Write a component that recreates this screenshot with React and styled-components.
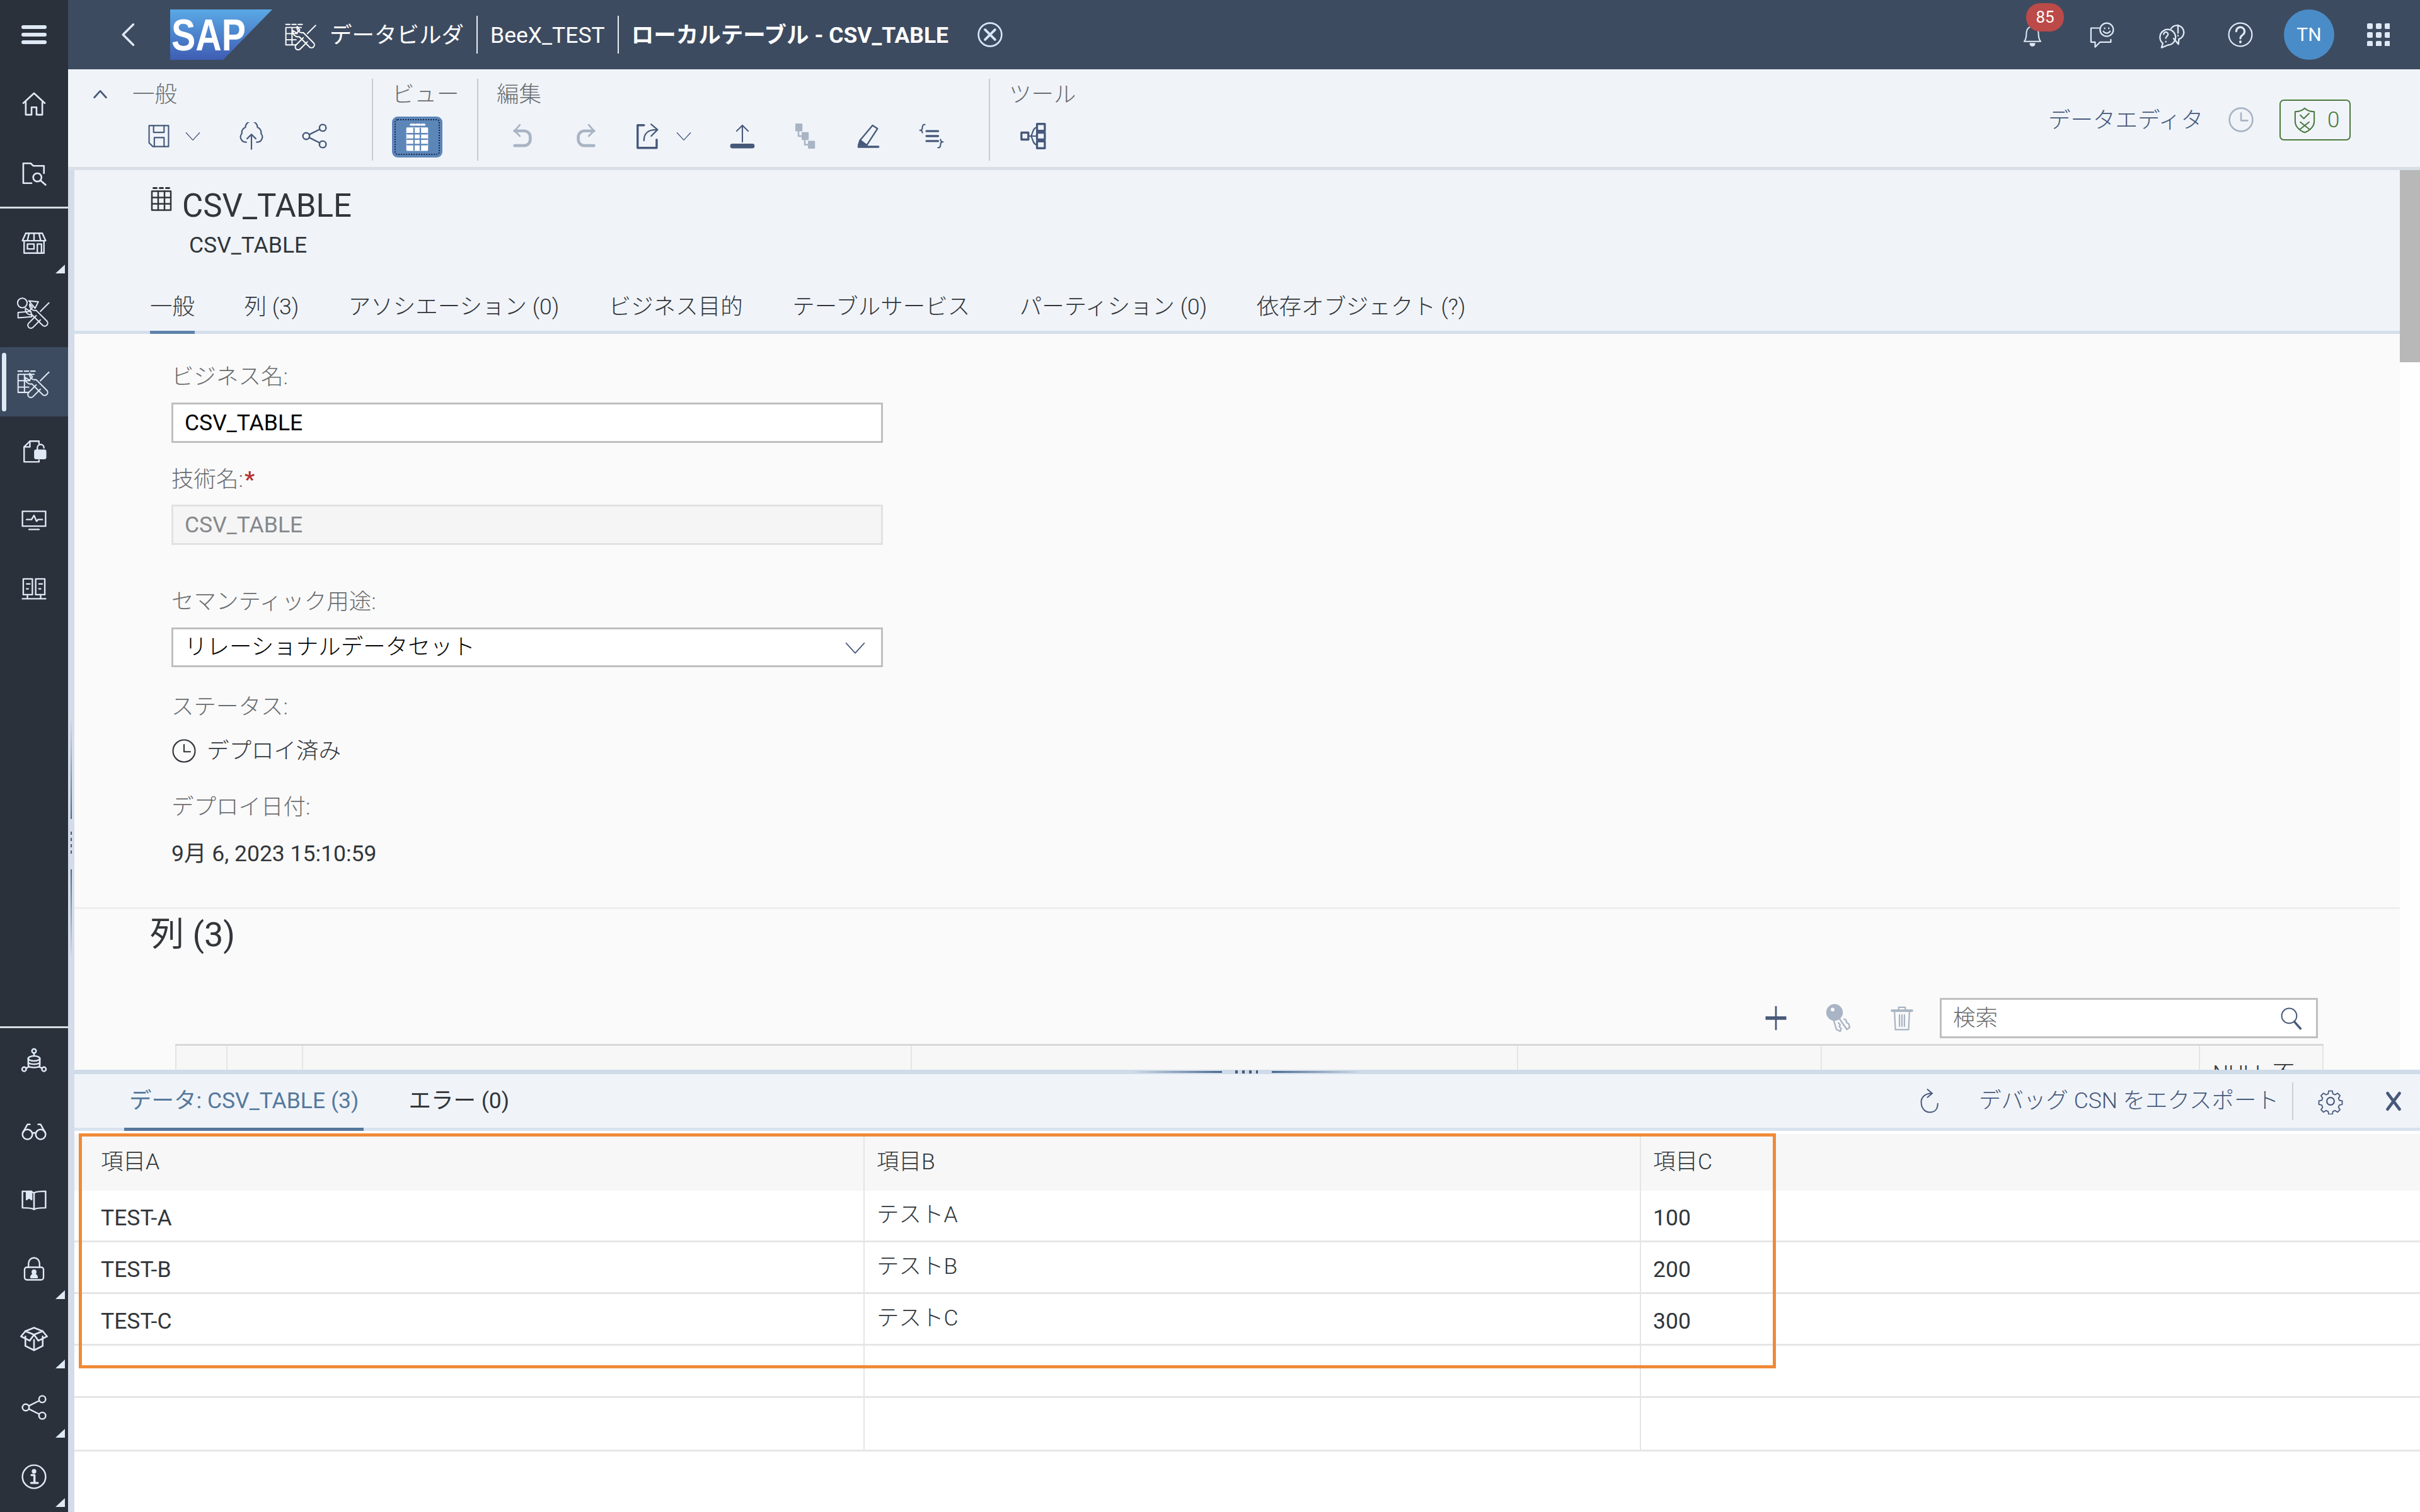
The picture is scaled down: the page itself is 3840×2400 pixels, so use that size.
import styled, { createGlobalStyle } from 'styled-components';

const SIDEBAR_W = 108;

const GlobalStyle = createGlobalStyle`
  html, body { margin: 0; padding: 0; background: #fff; }
  * { box-sizing: border-box; }
  body { font-family: Roboto, "Noto Sans CJK JP", sans-serif; font-size: 35.5px; font-weight: 300; color: #32363a; }
`;

const Page = styled.div`
  position: relative;
  width: 3840px;
  height: 2400px;
  overflow: hidden;
  display: grid;
  grid-template-columns: ${SIDEBAR_W}px 1fr;
`;

/* sidebar */
const Sidebar = styled.nav`
  background: #2a313b;
  color: #dfe9f5;
  display: flex;
  flex-direction: column;
`;
const NavGroup = styled.div`
  display: flex;
  flex-direction: column;
  height: ${p => (p.$ruled ? '221px' : 'auto')};
  border-bottom: ${p => (p.$ruled ? '3px solid #d8dde3' : 'none')};
`;
const NavSpacer = styled.div`
  height: ${p => p.$h}px;
`;
const NavRule = styled.div`
  height: 3px;
  margin-bottom: -3px;
  position: relative;
  z-index: 1;
  background: #d8dde3;
`;
const NavItem = styled.div`
  position: relative;
  height: 110px;
  flex: none;
  display: flex;
  align-items: center;
  justify-content: center;
  background: ${p => (p.$active ? '#3d4b60' : 'transparent')};
  &::before {
    content: '';
    display: ${p => (p.$active ? 'block' : 'none')};
    position: absolute;
    left: 3px;
    top: 9px;
    width: 7px;
    height: 93px;
    border-radius: 4px;
    background: #dfe9f5;
  }
  &::after {
    content: '';
    display: ${p => (p.$more ? 'block' : 'none')};
    position: absolute;
    right: 5px;
    bottom: 7px;
    border-style: solid;
    border-width: 0 0 14px 15px;
    border-color: transparent transparent #dfe9f5 transparent;
  }
`;

/* shell header */
const Main = styled.div`
  display: flex;
  flex-direction: column;
  min-width: 0;
`;
const ShellHeader = styled.header`
  position: relative;
  height: 110px;
  flex: none;
  background: #3d4b60;
  color: #fff;
  display: flex;
  align-items: center;
`;
const BackSlot = styled.span`
  position: absolute;
  left: 76px;
  top: 35px;
  color: #dfe9f5;
  display: flex;
`;
const CrumbRow = styled.div`
  display: flex;
  align-items: center;
  margin-left: 162px;
  height: 110px;
`;
const LogoBox = styled.svg`
  display: block;
  flex: none;
`;
const CrumbIcon = styled.span`
  display: flex;
  margin: 0 19px 0 20px;
`;
const CrumbText = styled.span`
  line-height: 44px;
  white-space: nowrap;
  font-weight: ${p => (p.$strong ? 700 : 400)};
  margin-top: 2px;
`;
const CrumbSep = styled.span`
  width: 2px;
  height: 60px;
  margin: 0 20px;
  background: #e8edf3;
`;
const CloseSlot = styled.span`
  display: flex;
  margin-left: 45px;
  color: #d6e6f7;
`;
const HeadAction = styled.span`
  position: absolute;
  left: ${p => p.$x - SIDEBAR_W}px;
  top: 55px;
  transform: translate(-50%, -50%);
  color: #dfe9f5;
  display: flex;
`;
const BellBadge = styled.span`
  position: absolute;
  left: ${3215 - SIDEBAR_W}px;
  top: 5px;
  width: 60px;
  height: 45px;
  border-radius: 22px;
  background: #bb4a48;
  color: #fff;
  font-size: 26px;
  font-weight: 400;
  line-height: 44px;
  text-align: center;
`;
const Avatar = styled.span`
  position: absolute;
  left: ${3624 - SIDEBAR_W}px;
  top: 15px;
  width: 80px;
  height: 80px;
  border-radius: 50%;
  background: #4a8cc8;
  color: #fff;
  font-size: 30px;
  font-weight: 400;
  line-height: 80px;
  text-align: center;
`;

/* toolbar */
const Toolbar = styled.div`
  position: relative;
  height: 160px;
  flex: none;
  background: #f0f4f9;
  border-bottom: 5px solid #d9dfe6;
`;
const GroupLabel = styled.span`
  position: absolute;
  left: ${p => p.$x - SIDEBAR_W}px;
  top: 18px;
  line-height: 44px;
  color: #6a6d70;
`;
const GroupSep = styled.span`
  position: absolute;
  left: ${p => p.$x - SIDEBAR_W}px;
  top: 15px;
  width: 2px;
  height: 130px;
  background: #c6ccd3;
`;
const ToolSlot = styled.span`
  position: absolute;
  left: ${p => p.$x - SIDEBAR_W}px;
  top: ${p => p.$y || 106}px;
  transform: translate(-50%, -50%);
  display: flex;
  color: ${p => (p.$off ? '#a9b4c4' : '#47597a')};
`;
const ViewToggle = styled.span`
  position: absolute;
  left: ${622 - SIDEBAR_W}px;
  top: 75px;
  width: 80px;
  height: 65px;
  border-radius: 9px;
  background: #5d86b8;
  color: #fff;
  outline: 2px dotted #16294a;
  outline-offset: -6px;
  display: flex;
  align-items: center;
  justify-content: center;
`;
const EditorName = styled.span`
  position: absolute;
  left: ${3250 - SIDEBAR_W}px;
  top: 59px;
  line-height: 44px;
  color: #47597a;
`;
const CheckBadge = styled.span`
  position: absolute;
  left: ${3617 - SIDEBAR_W}px;
  top: 48px;
  width: 113px;
  height: 65px;
  border: 2px solid #4c7a3f;
  border-radius: 7px;
  color: #4c7a3f;
  display: flex;
  align-items: center;
  padding-left: 16px;
  gap: 14px;
  font-size: 35px;
`;

/* body */
const Body = styled.div`
  flex: 1;
  display: flex;
  min-height: 0;
`;
const SideSplitter = styled.div`
  position: relative;
  width: 10px;
  flex: none;
  background: #d3dce8;
`;
const SideGrip = styled.span`
  position: absolute;
  left: 4px;
  top: ${p => p.$top}px;
  width: 2px;
  height: ${p => p.$h}px;
  background: ${p => p.$bg};
`;
const Workspace = styled.div`
  flex: 1;
  min-width: 0;
  display: flex;
  flex-direction: column;
`;
const UpperPane = styled.div`
  position: relative;
  height: 1428px;
  flex: none;
  overflow: hidden;
`;
const ScrollTrack = styled.div`
  position: absolute;
  right: 0;
  top: 0;
  bottom: 0;
  width: 32px;
  background: #fefefe;
  &::before {
    content: '';
    position: absolute;
    left: 0;
    right: 0;
    top: 0;
    height: 305px;
    background: #b8b8b8;
  }
`;
const ObjectHeader = styled.section`
  position: relative;
  height: 260px;
  background: #f0f4f9;
  border-bottom: 5px solid #d5dfeb;
`;
const TableGlyph = styled.span`
  position: absolute;
  left: 118px;
  top: 26px;
  display: flex;
  color: #32363a;
`;
const ObjectTitle = styled.h1`
  position: absolute;
  left: 171px;
  top: 27px;
  margin: 0;
  font-size: 51px;
  line-height: 60px;
  font-weight: 400;
`;
const ObjectSub = styled.div`
  position: absolute;
  left: 182px;
  top: 97px;
  line-height: 44px;
  font-weight: 400;
`;
const TabStrip = styled.div`
  position: absolute;
  left: 120px;
  top: 190px;
  display: flex;
  gap: 78.5px;
`;
const Tab = styled.span`
  position: relative;
  height: 65px;
  line-height: 54px;
  white-space: nowrap;
  &::after {
    content: '';
    display: ${p => (p.$active ? 'block' : 'none')};
    position: absolute;
    left: 0;
    right: 0;
    bottom: -5px;
    height: 5px;
    background: #5f83ab;
  }
`;
const Form = styled.section`
  position: relative;
  height: 1168px;
  background: #fafafa;
  padding: 46px 0 0 154px;
`;
const FieldLabel = styled.label`
  display: block;
  line-height: 44px;
  color: #6a6d70;
  margin-top: ${p => p.$mt || 0}px;
`;
const Required = styled.span`
  color: #b3332e;
  font-weight: 700;
  margin-left: 2px;
`;
const FieldBox = styled.div`
  width: 1129px;
  height: ${p => p.$h || 64}px;
  margin-top: ${p => p.$mt}px;
  padding: 0 18px;
  display: flex;
  align-items: center;
  justify-content: space-between;
  font-weight: 400;
  background: ${p => (p.$disabled ? '#f5f5f5' : '#fff')};
  border: 3px solid ${p => (p.$disabled ? '#e2e2e2' : '#bfbfbf')};
  color: ${p => (p.$disabled ? '#85888b' : '#000')};
`;
const RaisedText = styled.span`
  position: relative;
  top: -4px;
  font-weight: 300;
`;
const StatusRow = styled.div`
  margin-top: 26px;
  height: 44px;
  display: flex;
  align-items: center;
  gap: 16px;
  color: #32363a;
`;
const DateValue = styled.div`
  margin-top: 30px;
  line-height: 44px;
  font-weight: 400;
`;
const Divider = styled.div`
  height: 3px;
  margin: 63px 0 0 -154px;
  background: #eeeeee;
`;
const SectionTitle = styled.h2`
  margin: 11px 0 0 -34px;
  font-size: 54px;
  line-height: 60px;
  font-weight: 400;
`;
const TableAction = styled.span`
  position: absolute;
  left: ${p => p.$x - 118}px;
  top: 1086px;
  transform: translate(-50%, -50%);
  display: flex;
  color: ${p => (p.$off ? '#a9b4c4' : '#47597a')};
`;
const SearchBox = styled.div`
  position: absolute;
  left: 2960px;
  top: 1054px;
  width: 600px;
  height: 64px;
  background: #fff;
  border: 3px solid #bfbfbf;
  color: #6a6d70;
  padding: 0 20px 0 18px;
  display: flex;
  align-items: center;
  justify-content: space-between;
`;
const FieldIcon = styled.span`
  display: flex;
  color: #47597a;
`;
const ColumnHead = styled.div`
  position: absolute;
  left: 160px;
  top: 1127px;
  width: 3409px;
  height: 41px;
  overflow: hidden;
  background: #f7f7f7;
  border-top: 3px solid #d9d9d9;
  display: grid;
  grid-template-columns: 81px 120px 966px 962px 482px 600px 198px;
`;
const ColumnCell = styled.div`
  height: 44px;
  border-left: 2px solid #e5e5e5;
  border-right: ${p => (p.$last ? '2px solid #e5e5e5' : 'none')};
  padding: 22px 0 0 20px;
  line-height: 44px;
  white-space: nowrap;
  color: #32363a;
`;

/* horizontal splitter */
const SplitBar = styled.div`
  position: relative;
  height: 7px;
  flex: none;
  background: #cfdbe8;
`;
const GripLine = styled.span`
  position: absolute;
  top: 2px;
  left: ${p => p.$x - 118}px;
  width: 144px;
  height: 3px;
  background: linear-gradient(${p => p.$dir}, rgba(71, 100, 140, 0), #47648c);
`;
const GripDots = styled.span`
  position: absolute;
  top: 1px;
  left: ${1960 - 118}px;
  width: 36px;
  height: 5px;
  background: repeating-linear-gradient(90deg, #47597a 0 4px, transparent 4px 11px);
`;

/* lower panel */
const PanelBar = styled.div`
  position: relative;
  height: 90px;
  flex: none;
  background: #f0f4f9;
  border-bottom: 5px solid #d9e3ee;
  display: flex;
  padding-left: 79px;
  gap: 63px;
`;
const PanelTab = styled.span`
  position: relative;
  padding: 0 8px;
  height: 85px;
  line-height: 84px;
  font-weight: 400;
  white-space: nowrap;
  color: ${p => (p.$active ? '#56799c' : '#32363a')};
  &::after {
    content: '';
    display: ${p => (p.$active ? 'block' : 'none')};
    position: absolute;
    left: 0;
    right: 0;
    bottom: -5px;
    height: 5px;
    background: #56779b;
  }
`;
const PanelAction = styled.span`
  position: absolute;
  left: ${p => p.$x - 118}px;
  top: 43px;
  transform: translate(-50%, -50%);
  display: flex;
  color: #47597a;
`;
const ExportLink = styled.span`
  position: absolute;
  left: ${3140 - 118}px;
  top: 20px;
  line-height: 44px;
  white-space: nowrap;
  color: #47597a;
`;
const PanelSep = styled.span`
  position: absolute;
  left: ${3637 - 118}px;
  top: 13px;
  width: 2px;
  height: 60px;
  background: #c9d0d8;
`;
const DataGrid = styled.div`
  flex: 1;
  background: #fff;
  padding-top: 5px;
`;
const DataRow = styled.div`
  display: grid;
  grid-template-columns: 1252px 1232px 1fr;
  height: ${p => p.$h}px;
  background: ${p => (p.$head ? '#f7f7f7' : '#fff')};
  border-bottom: ${p => (p.$head ? 'none' : '3px solid #e6e6e6')};
`;
const DataCell = styled.div`
  padding-left: ${p => (p.$first ? 42 : 19)}px;
  border-left: ${p => (p.$first ? 'none' : '2px solid #e5e5e5')};
  display: flex;
  align-items: center;
  color: #32363a;
  font-weight: ${p => (p.$cjk ? 300 : 400)};
  & > span {
    position: relative;
    top: ${p => (p.$cjk ? -5 : 3)}px;
  }
`;
const CalloutFrame = styled.div`
  position: absolute;
  left: 125px;
  top: 1799px;
  width: 2693px;
  height: 373px;
  border: 5px solid #ef8a38;
  pointer-events: none;
`;

/* every drawing sits on a 32 unit grid */
const tools = (
  <>
    <path d="M12 8a5 5 0 0 0 6 6l10 10a2.500 2.500 0 0 1-4 4L14 18a5 5 0 0 1-6-6l3.500 2.500 3-3z" />
    <path d="M30 7l-8 8" />
    <path d="M18 19l-7 7a2.500 2.500 0 0 0 4 4l7-7" />
  </>
);

const paths = {
  home: (
    <>
      <path d="M3 15 16 3l13 12" />
      <path d="M6 14v15h7v-9h6v9h7V14" />
    </>
  ),
  folderSearch: (
    <>
      <path d="M13 28H3V4h9l3 3h13v9" />
      <circle cx="20" cy="21" r="5" />
      <path d="M24 25l6 5" />
    </>
  ),
  store: (
    <>
      <path d="M6 4h20l4 9H2z" />
      <path d="M10 4l-2 9M16 4v9M22 4l2 9" />
      <path d="M4 13v15h24V13" />
      <path d="M8 17h8v6H8zM20 28V17h5v11" />
    </>
  ),
  modeler: (
    <>
      <circle cx="5" cy="7" r="4.500" />
      <path d="M1 16l12-1 1 5-13 1z" />
      <path d="M11 5l9 1-3 6z" />
      {tools}
    </>
  ),
  tableTools: (
    <>
      <path d="M1 6h4M7 6h4M13 6h4" />
      <path d="M1 26V9h15M1 15h11M1 21h10M1 26h10M7 9v17" />
      {tools}
    </>
  ),
  docLock: (
    <>
      <path d="M22 7V4H11L4 11v18h18v-2" />
      <path d="M11 4v7H4" />
      <path d="M20 15v-3a4 4 0 0 1 8 0" />
      <rect x="17" y="15" width="13" height="10" rx="1.500" fill="currentColor" />
    </>
  ),
  monitor: (
    <>
      <rect x="2" y="5" width="28" height="18" />
      <path d="M7 15h6l3-5 3 7 2-2h5" />
      <path d="M10 27h12" />
    </>
  ),
  servers: (
    <>
      <rect x="3" y="3" width="11" height="19" />
      <rect x="18" y="3" width="11" height="19" />
      <path d="M7 9h4M22 9h4M7 15h2M22 15h2" />
      <path d="M2 27h28M8 22v5M24 22v5" />
    </>
  ),
  dbNet: (
    <>
      <circle cx="16" cy="4" r="2.500" />
      <path d="M16 7v3" />
      <ellipse cx="16" cy="13" rx="7" ry="3" />
      <path d="M9 13v8c0 4 14 4 14 0v-8M9 17c0 4 14 4 14 0" />
      <circle cx="4" cy="26" r="2.500" />
      <circle cx="28" cy="26" r="2.500" />
      <path d="M6 25l4-2M26 25l-4-2" />
    </>
  ),
  glasses: (
    <>
      <circle cx="8" cy="21" r="6" />
      <circle cx="24" cy="21" r="6" />
      <path d="M14 20a2.500 2.500 0 0 1 4 0" />
      <path d="M2.500 19 8 9h3M29.500 19 24 9h-3" />
    </>
  ),
  book: (
    <>
      <path d="M16 8C13 6 8 6 2 6v20c6 0 11 0 14 2 3-2 8-2 14-2V6c-6 0-11 0-14 2zM16 8v20" />
      <path d="M7 6v10l3-2.500 3 2.500V6z" fill="currentColor" />
    </>
  ),
  lock: (
    <>
      <rect x="4" y="14" width="24" height="16" rx="3" />
      <path d="M9 14V9a7 7 0 0 1 14 0v5" />
      <circle cx="16" cy="20" r="2.200" fill="currentColor" />
      <path d="M12 27a4 4 0 0 1 8 0z" fill="currentColor" />
    </>
  ),
  box: (
    <>
      <path d="M16 12 6 8l10-4 10 4z" />
      <path d="M6 14v11l10 5 10-5V14M16 18v12" />
      <path d="M16 12l-5 7-10-5 5-6M16 12l5 7 10-5-5-6" />
    </>
  ),
  share: (
    <>
      <circle cx="6" cy="16" r="4" />
      <circle cx="26" cy="6" r="4" />
      <circle cx="26" cy="26" r="4" />
      <path d="M10 14l12-6M10 18l12 6" />
    </>
  ),
  info: (
    <>
      <circle cx="16" cy="16" r="14" />
      <circle cx="16" cy="9.500" r="1.800" fill="currentColor" />
      <path d="M13 14h3.500v9M12.500 23.500h8" strokeWidth="2.600" />
    </>
  ),
  back: <path d="M22 3 9 16l13 13" />,
  closeRound: (
    <>
      <circle cx="16" cy="16" r="14" />
      <path d="M10 10l12 12M22 10 10 22" strokeWidth="3" />
    </>
  ),
  bell: (
    <>
      <path d="M5 25c3-3 3-8 3-12a8 8 0 0 1 16 0c0 4 0 9 3 12z" />
      <path d="M13 28a3 3 0 0 0 6 0z" fill="currentColor" />
    </>
  ),
  feedback: (
    <>
      <path d="M13 8H3v17h5v6l6-6h13v-3" />
      <circle cx="22" cy="10" r="8" />
      <path d="M18 12c2 3 6 3 8 0" />
      <path d="M19.500 8v.5M24.500 8v.5" />
    </>
  ),
  chat: (
    <>
      <path d="M5 31l1.500-5a9 9 0 1 1 6 2z" />
      <path d="M7.500 15.500a2.500 2.500 0 1 1 4 2c-1 .8-1.500 1.300-1.500 2.500M10 24v.3" />
      <path d="M16 9a8 8 0 1 1 9 12l-.5 6-5.500-6.500" />
      <path d="M24 5v9M24 17v.3" />
    </>
  ),
  help: (
    <>
      <circle cx="16" cy="16" r="14" />
      <path d="M11 12a5 5 0 1 1 8 4c-2 1.500-3 2.500-3 4.500" strokeWidth="2.400" />
      <path d="M16 24.500v.5" strokeWidth="3" />
    </>
  ),
  collapse: <path d="M6 21 16 10l10 11" strokeWidth="3" />,
  save: (
    <>
      <path d="M3 2h26v28H8l-5-5z" />
      <path d="M9 2v9h14V2M10 30V18h13v12" />
    </>
  ),
  chevron: <path d="M6 11l10 11 10-11" />,
  cloud: (
    <>
      <path d="M10 23a6 6 0 0 1-5-10 6 6 0 0 1 4-7 7 7 0 0 1 14 0 6 6 0 0 1 4 7 6 6 0 0 1-5 10" />
      <path d="M16 31V14M11 19l5-5 5 5" />
    </>
  ),
  undo: (
    <>
      <path d="M13 3 7 10l6 6" />
      <path d="M7 10h11a7 7 0 0 1 7 7v3a7 7 0 0 1-7 7H7" strokeWidth="3.400" />
    </>
  ),
  redo: (
    <>
      <path d="M19 3l6 7-6 6" />
      <path d="M25 10H14a7 7 0 0 0-7 7v3a7 7 0 0 0 7 7h11" strokeWidth="3.400" />
    </>
  ),
  exportTo: (
    <>
      <path d="M11 4H4v25h21v-9" strokeWidth="2.400" />
      <path d="M11 21c0-8 4-12 14-12M19 3l7 6-7 7" />
    </>
  ),
  upload: (
    <>
      <path d="M16 23V3M9 10l7-7 7 7" />
      <rect x="2" y="26" width="28" height="4" rx="2" fill="currentColor" />
    </>
  ),
  steps: (
    <>
      <rect x="5" y="1" width="7" height="8" fill="currentColor" />
      <rect x="13" y="12" width="7" height="8" fill="currentColor" />
      <rect x="21" y="23" width="7" height="8" fill="currentColor" />
      <path d="M8 9v7h5M16 20v7h5" />
    </>
  ),
  pen: (
    <>
      <path d="M21 3l6 4-13 20H4l2-6z" />
      <path d="M6 21l8 6H4z" fill="currentColor" />
      <path d="M4 29h24" strokeWidth="2.600" />
    </>
  ),
  braces: (
    <>
      <path d="M8 2C5 2 5 4 5 6s-1 3-3 3c2 0 3 1 3 3" />
      <path d="M24 30c3 0 3-2 3-4s1-3 3-3c-2 0-3-1-3-3" />
      <path d="M10 10h14M10 16h14M10 22h14" strokeWidth="2.600" />
    </>
  ),
  hierarchy: (
    <>
      <rect x="2" y="12" width="8" height="8" strokeWidth="2.400" />
      <rect x="20" y="2" width="9" height="8" strokeWidth="2.400" />
      <rect x="20" y="12" width="9" height="8" strokeWidth="2.400" />
      <rect x="20" y="22" width="9" height="8" strokeWidth="2.400" />
      <path d="M10 16h10M13 16c2-2 2-10 7-10M13 16c2 2 2 10 7 10" />
    </>
  ),
  viewTable: (
    <>
      <path d="M9 2h4M15 2h4M21 2h3" strokeWidth="2.400" />
      <rect x="5" y="6" width="22" height="24" fill="currentColor" />
      <path d="M12.500 6v24M19.500 6v24M5 12h22M5 18h22M5 24h22" stroke="#5d86b8" strokeWidth="1.600" />
    </>
  ),
  tableIcon: (
    <>
      <path d="M6 2h4M14 2h4M22 2h4" strokeWidth="2.400" />
      <rect x="4" y="6" width="24" height="24" />
      <path d="M12 6v24M20 6v24M4 14h24M4 22h24" />
    </>
  ),
  clock: (
    <>
      <circle cx="16" cy="16" r="14" />
      <path d="M16 8v9h8" />
    </>
  ),
  shield: (
    <>
      <path d="M16 2c3 3 7 4 11 4v11c0 6-5 11-11 13C10 28 5 23 5 17V6c4 0 8-1 11-4z" />
      <path d="M11 10l4 4 6-6M11 18l10 8M21 18l-10 8" />
    </>
  ),
  plus: (
    <>
      <path d="M16 3v26" />
      <path d="M4 16h24" strokeWidth="4" strokeLinecap="butt" />
    </>
  ),
  keys: (
    <>
      <circle cx="12" cy="10" r="8" fill="currentColor" />
      <circle cx="10" cy="7" r="2" fill="#fafafa" stroke="none" />
      <path d="M16 15l9 13 3-2-1-4-2-1-1-3-2-1" />
      <path d="M11 18l3 10 4 2 1-3-2-2 1-2-2-2" />
    </>
  ),
  trash: (
    <>
      <path d="M4 7h24" strokeWidth="3" />
      <path d="M12 6V3h8v3" />
      <path d="M7 9l1 21h16l1-21M13 12v14M16 12v14M19 12v14" />
    </>
  ),
  search: (
    <>
      <circle cx="13" cy="13" r="10" />
      <path d="M20 21l8 9" strokeWidth="3" />
    </>
  ),
  refresh: (
    <>
      <path d="M19 6C12 6 6 10 6 17s4 13 11 13 10-5 10-11" />
      <path d="M14 1l6 5-6 5" />
    </>
  ),
  gear: (
    <>
      <circle cx="16" cy="16" r="4.500" />
      <path d="M13.500 2h5l.8 4 3 1.300 3.500-2.200 3.400 3.500-2.200 3.500 1.200 2.900 4 .8v5l-4 .8-1.200 3 2.200 3.500-3.400 3.400-3.500-2.200-3 1.200-.8 4h-5l-.8-4-3-1.200-3.500 2.200-3.400-3.400 2.200-3.500-1.200-3-4-.8v-5l4-.8 1.200-2.900-2.200-3.500 3.400-3.500 3.500 2.200 3-1.300z" transform="translate(2.100 1.800) scale(.87)" />
    </>
  ),
  close: <path d="M7 4l18 24M25 4 7 28" strokeWidth="4.400" />,
};

function Icon({ name, size = 40, sw = 2 }) {
  return (
    <svg
      width={size}
      height={size}
      viewBox="0 0 32 32"
      fill="none"
      stroke="currentColor"
      strokeWidth={sw}
      strokeLinecap="round"
      strokeLinejoin="round"
    >
      {paths[name]}
    </svg>
  );
}

function MenuGlyph() {
  return (
    <svg width="40" height="30" viewBox="0 0 40 30" fill="currentColor">
      <rect x="0" y="0" width="40" height="6" rx="3" />
      <rect x="0" y="12" width="40" height="6" rx="3" />
      <rect x="0" y="24" width="40" height="6" rx="3" />
    </svg>
  );
}

function AppsGlyph() {
  const cells = [0, 14, 28];
  return (
    <svg width="36" height="36" viewBox="0 0 36 36" fill="currentColor">
      {cells.map(y =>
        cells.map(x => <rect key={`${x}-${y}`} x={x} y={y} width="9" height="9" rx="2" />)
      )}
    </svg>
  );
}

function SapLogo() {
  return (
    <LogoBox width="162" height="80" viewBox="0 0 162 80">
      <defs>
        <linearGradient id="sapFill" x1="0" y1="0" x2="0" y2="1">
          <stop offset="0" stopColor="#5aa9e6" />
          <stop offset="1" stopColor="#3f5db3" />
        </linearGradient>
      </defs>
      <path d="M0 0h162L84 80H0z" fill="url(#sapFill)" />
      <text
        x="2"
        y="65"
        fill="#fff"
        fontFamily="'Liberation Sans', sans-serif"
        fontWeight="700"
        fontSize="70"
        textLength="118"
        lengthAdjust="spacingAndGlyphs"
      >
        SAP
      </text>
    </LogoBox>
  );
}

const NAV_TOP = [
  { icon: 'home' },
  { icon: 'folderSearch' },
];
const NAV_MIDDLE = [
  { icon: 'store', more: true },
  { icon: 'modeler', size: 54, sw: 1.2 },
  { icon: 'tableTools', size: 54, sw: 1.2, active: true },
  { icon: 'docLock', size: 42 },
  { icon: 'monitor', size: 42 },
  { icon: 'servers', size: 42 },
];
const NAV_BOTTOM = [
  { icon: 'dbNet', size: 42 },
  { icon: 'glasses', size: 42 },
  { icon: 'book', size: 42 },
  { icon: 'lock', size: 40, more: true },
  { icon: 'box', size: 44, more: true },
  { icon: 'share', size: 42, more: true },
  { icon: 'info', size: 42, more: true },
];

const HEAD_ACTIONS = [
  { x: 3225, icon: 'bell', size: 38 },
  { x: 3335, icon: 'feedback', size: 42 },
  { x: 3445, icon: 'chat', size: 44 },
  { x: 3555, icon: 'help', size: 42 },
];

const TOOLS = [
  { x: 252, icon: 'save', size: 38, sw: 1.8 },
  { x: 306, icon: 'chevron', size: 34, sw: 1.3 },
  { x: 399, icon: 'cloud', size: 44, sw: 1.6 },
  { x: 499, icon: 'share', size: 42, sw: 1.8 },
  { x: 829, icon: 'undo', size: 44, sw: 2, off: true },
  { x: 930, icon: 'redo', size: 44, sw: 2, off: true },
  { x: 1029, icon: 'exportTo', size: 46, sw: 1.6 },
  { x: 1085, icon: 'chevron', size: 34, sw: 1.3 },
  { x: 1178, icon: 'upload', size: 42, sw: 1.6 },
  { x: 1277, icon: 'steps', size: 40, off: true },
  { x: 1378, icon: 'pen', size: 42, sw: 1.8 },
  { x: 1478, icon: 'braces', size: 42, sw: 1.6 },
  { x: 1640, icon: 'hierarchy', size: 44, sw: 1.6 },
];

const OBJECT_TABS = ['一般', '列 (3)', 'アソシエーション (0)', 'ビジネス目的', 'テーブルサービス', 'パーティション (0)', '依存オブジェクト (?)'];
const COLUMN_CELLS = ['', '', '', '', '', '', 'NULL 不'];

const ROWS = [
  { h: 82, cells: ['TEST-A', 'テストA', '100'] },
  { h: 82, cells: ['TEST-B', 'テストB', '200'] },
  { h: 82, cells: ['TEST-C', 'テストC', '300'] },
  { h: 83, cells: ['', '', ''] },
  { h: 85, cells: ['', '', ''] },
];

export default function App() {
  return (
    <Page>
      <GlobalStyle />
      <Sidebar>
        <NavItem>
          <MenuGlyph />
        </NavItem>
        <NavGroup $ruled>
          {NAV_TOP.map(item => (
            <NavItem key={item.icon}>
              <Icon name={item.icon} size={42} />
            </NavItem>
          ))}
        </NavGroup>
        <NavGroup>
          {NAV_MIDDLE.map(item => (
            <NavItem key={item.icon} $active={item.active} $more={item.more}>
              <Icon name={item.icon} size={item.size || 42} sw={item.sw || 1.8} />
            </NavItem>
          ))}
        </NavGroup>
        <NavSpacer $h={638} />
        <NavRule />
        <NavGroup>
          {NAV_BOTTOM.map(item => (
            <NavItem key={item.icon} $more={item.more}>
              <Icon name={item.icon} size={item.size} sw={1.9} />
            </NavItem>
          ))}
        </NavGroup>
      </Sidebar>

      <Main>
        <ShellHeader>
          <BackSlot>
            <Icon name="back" size={40} sw={2.8} />
          </BackSlot>
          <CrumbRow>
            <SapLogo />
            <CrumbIcon>
              <Icon name="tableTools" size={52} sw={1.2} />
            </CrumbIcon>
            <CrumbText>データビルダ</CrumbText>
            <CrumbSep />
            <CrumbText>BeeX_TEST</CrumbText>
            <CrumbSep />
            <CrumbText $strong>ローカルテーブル - CSV_TABLE</CrumbText>
            <CloseSlot>
              <Icon name="closeRound" size={42} />
            </CloseSlot>
          </CrumbRow>
          {HEAD_ACTIONS.map(a => (
            <HeadAction key={a.icon} $x={a.x}>
              <Icon name={a.icon} size={a.size} sw={1.7} />
            </HeadAction>
          ))}
          <BellBadge>85</BellBadge>
          <Avatar>TN</Avatar>
          <HeadAction $x={3774}>
            <AppsGlyph />
          </HeadAction>
        </ShellHeader>

        <Toolbar>
          <ToolSlot $x={159} $y={40}>
            <Icon name="collapse" size={30} />
          </ToolSlot>
          <GroupLabel $x={210}>一般</GroupLabel>
          <GroupSep $x={590} />
          <GroupLabel $x={622}>ビュー</GroupLabel>
          <GroupSep $x={757} />
          <GroupLabel $x={788}>編集</GroupLabel>
          <GroupSep $x={1569} />
          <GroupLabel $x={1601}>ツール</GroupLabel>
          {TOOLS.map(t => (
            <ToolSlot key={`${t.icon}-${t.x}`} $x={t.x} $off={t.off}>
              <Icon name={t.icon} size={t.size} sw={t.sw} />
            </ToolSlot>
          ))}
          <ViewToggle>
            <Icon name="viewTable" size={46} />
          </ViewToggle>
          <EditorName>データエディタ</EditorName>
          <ToolSlot $x={3556} $y={80} $off>
            <Icon name="clock" size={42} />
          </ToolSlot>
          <CheckBadge>
            <Icon name="shield" size={44} sw={1.5} />
            0
          </CheckBadge>
        </Toolbar>

        <Body>
          <SideSplitter>
            <SideGrip $top={870} $h={160} $bg="linear-gradient(180deg, rgba(71,100,140,0), #47648c)" />
            <SideGrip $top={1050} $h={40} $bg="repeating-linear-gradient(180deg, #47597a 0 5px, transparent 5px 10px)" />
            <SideGrip $top={1110} $h={140} $bg="linear-gradient(0deg, rgba(71,100,140,0), #47648c)" />
          </SideSplitter>
          <Workspace>
            <UpperPane>
              <ObjectHeader>
                <TableGlyph>
                  <Icon name="tableIcon" size={40} sw={2} />
                </TableGlyph>
                <ObjectTitle>CSV_TABLE</ObjectTitle>
                <ObjectSub>CSV_TABLE</ObjectSub>
                <TabStrip>
                  {OBJECT_TABS.map((t, i) => (
                    <Tab key={t} $active={i === 0}>{t}</Tab>
                  ))}
                </TabStrip>
              </ObjectHeader>
              <Form>
                <FieldLabel>ビジネス名:</FieldLabel>
                <FieldBox $mt={19}>CSV_TABLE</FieldBox>
                <FieldLabel $mt={36}>技術名:<Required>*</Required></FieldLabel>
                <FieldBox $mt={18} $disabled>CSV_TABLE</FieldBox>
                <FieldLabel $mt={68}>セマンティック用途:</FieldLabel>
                <FieldBox $mt={19} $h={63}>
                  <RaisedText>リレーショナルデータセット</RaisedText>
                  <FieldIcon>
                    <Icon name="chevron" size={46} sw={1.2} />
                  </FieldIcon>
                </FieldBox>
                <FieldLabel $mt={41}>ステータス:</FieldLabel>
                <StatusRow>
                  <Icon name="clock" size={40} sw={1.7} />
                  <RaisedText>デプロイ済み</RaisedText>
                </StatusRow>
                <FieldLabel $mt={45}>デプロイ日付:</FieldLabel>
                <DateValue>9月 6, 2023 15:10:59</DateValue>
                <Divider />
                <SectionTitle>列 (3)</SectionTitle>
                <TableAction $x={2818}>
                  <Icon name="plus" size={44} />
                </TableAction>
                <TableAction $x={2917} $off>
                  <Icon name="keys" size={48} sw={1.6} />
                </TableAction>
                <TableAction $x={3018} $off>
                  <Icon name="trash" size={42} sw={1.7} />
                </TableAction>
                <SearchBox>
                  <RaisedText>検索</RaisedText>
                  <FieldIcon>
                    <Icon name="search" size={38} sw={1.7} />
                  </FieldIcon>
                </SearchBox>
                <ColumnHead>
                  {COLUMN_CELLS.map((c, i) => (
                    <ColumnCell key={i} $last={i === COLUMN_CELLS.length - 1}>{c}</ColumnCell>
                  ))}
                </ColumnHead>
              </Form>
              <ScrollTrack />
            </UpperPane>

            <SplitBar>
              <GripLine $x={1795} $dir="90deg" />
              <GripDots />
              <GripLine $x={2018} $dir="270deg" />
            </SplitBar>

            <PanelBar>
              <PanelTab $active>データ: CSV_TABLE (3)</PanelTab>
              <PanelTab>エラー (0)</PanelTab>
              <PanelAction $x={3061}>
                <Icon name="refresh" size={40} sw={1.6} />
              </PanelAction>
              <ExportLink>デバッグ CSN をエクスポート</ExportLink>
              <PanelSep />
              <PanelAction $x={3698}>
                <Icon name="gear" size={42} sw={1.6} />
              </PanelAction>
              <PanelAction $x={3798}>
                <Icon name="close" size={34} />
              </PanelAction>
            </PanelBar>

            <DataGrid>
              <DataRow $head $h={90}>
                <DataCell $first $cjk><span>項目A</span></DataCell>
                <DataCell $cjk><span>項目B</span></DataCell>
                <DataCell $cjk><span>項目C</span></DataCell>
              </DataRow>
              {ROWS.map((row, r) => (
                <DataRow key={r} $h={row.h}>
                  <DataCell $first><span>{row.cells[0]}</span></DataCell>
                  <DataCell $cjk><span>{row.cells[1]}</span></DataCell>
                  <DataCell><span>{row.cells[2]}</span></DataCell>
                </DataRow>
              ))}
            </DataGrid>
          </Workspace>
        </Body>
      </Main>
      <CalloutFrame />
    </Page>
  );
}
